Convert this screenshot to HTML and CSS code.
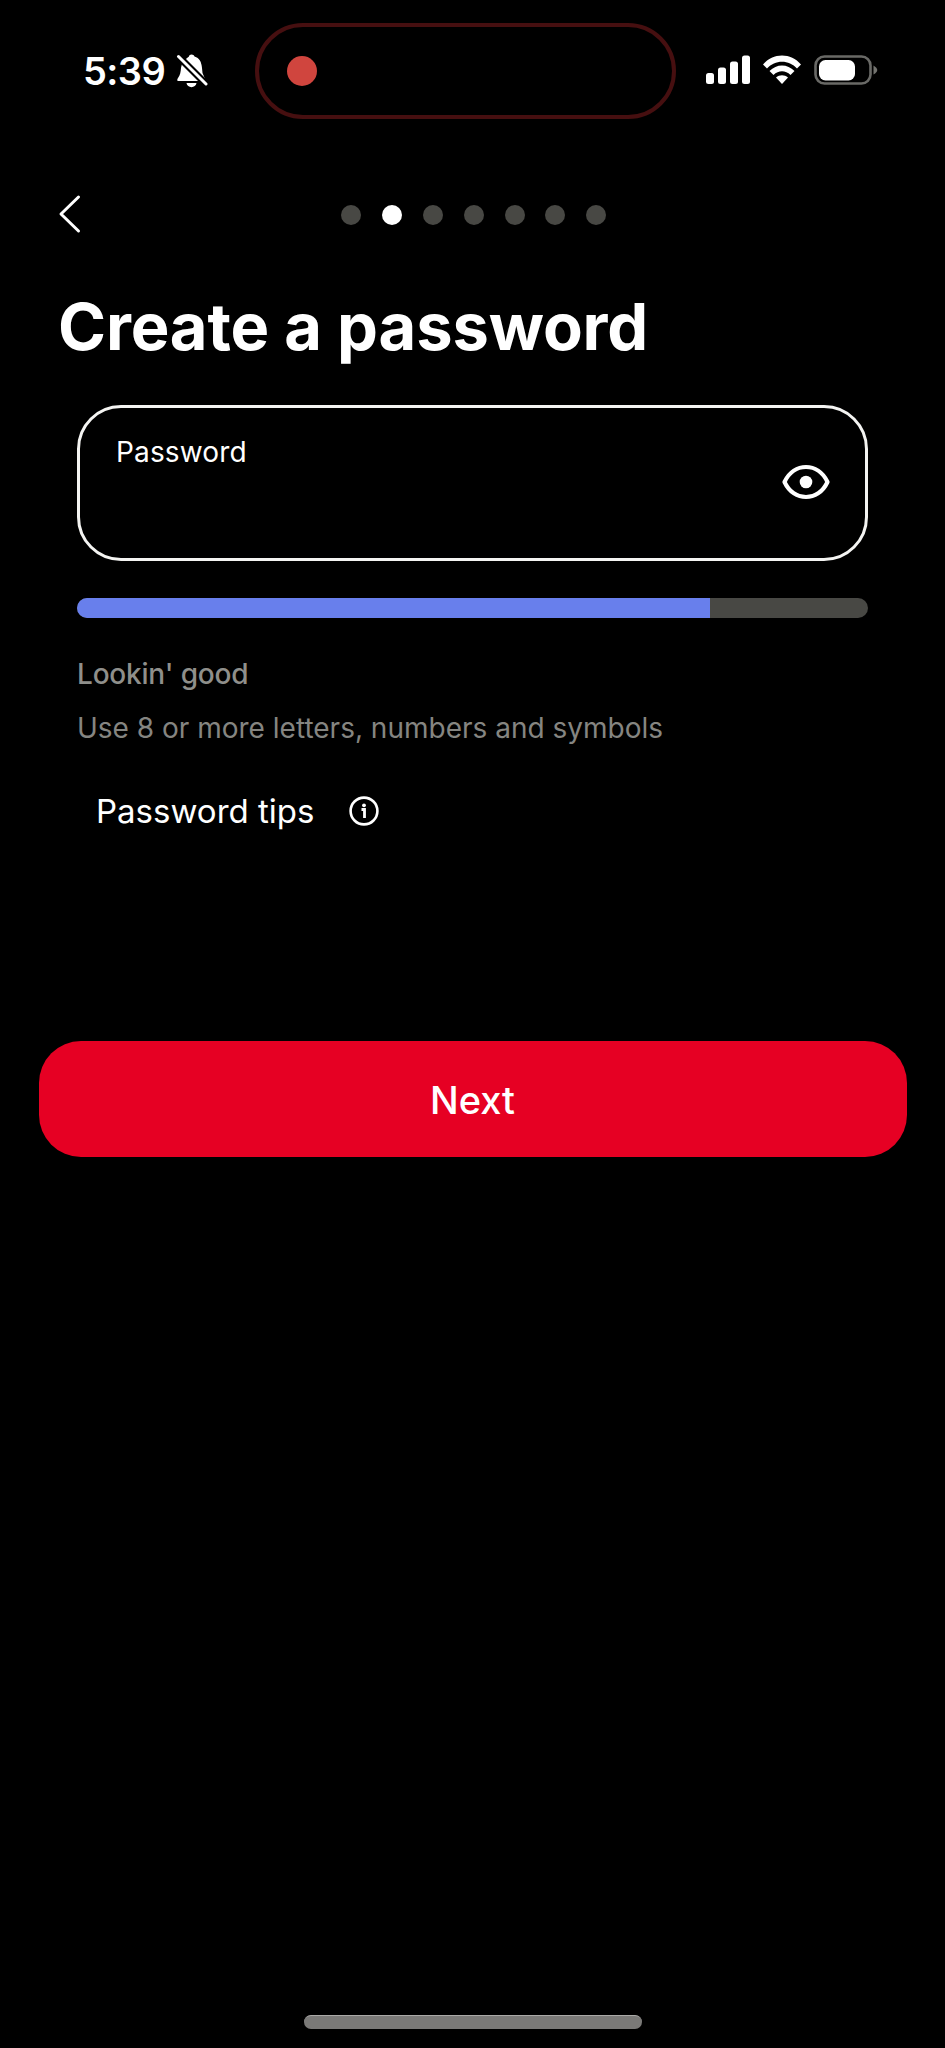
FILE: index.html
```html
<!DOCTYPE html>
<html lang="en">
<head>
<meta charset="utf-8">
<title>Create a password</title>
<link rel="stylesheet" href="styles.css">
</head>
<body>
<div class="screen">
  <header class="status">
    <div class="clock"><span class="time">5:39</span>
      <svg class="bell" width="32" height="36" viewBox="0 0 32 36"><path fill="#fff" d="M9 7.5C10.500 5 12.500 3.800 13 3.500C13 .7 18 .7 18.500 3.500C23.500 5 25.500 9 26 15L26.500 20L29.500 27L20 18ZM5 15C5.200 14 5.500 12.500 6 11L23.500 28H2C1 28 1 26 2 25C4.200 22 4.700 19 5 15ZM10.500 30H20.500C20 35.500 11 35.500 10.500 30Z"/><path stroke="#000" stroke-width="7" d="M3 4L30 31"/><path stroke="#fff" stroke-width="3" stroke-linecap="round" d="M2.500 3.500L30 31"/></svg>
    </div>
    <div class="island"><span class="record"></span></div>
    <div class="system">
      <svg width="45" height="30" viewBox="0 0 45 30" fill="#fff"><rect x="0" y="18" width="8" height="11" rx="2.500"/><rect x="12" y="12.500" width="8" height="16.500" rx="2.500"/><rect x="24" y="6.500" width="8" height="22.500" rx="2.500"/><rect x="36" y="0.500" width="8" height="28.500" rx="2.500"/></svg>
      <svg class="wifi" width="38" height="30" viewBox="0 0 38 30" fill="#fff"><path d="M0 9.500C10-2.500 28-2.500 38 9.500L34 13.500C26 4.500 12 4.500 4 13.500Z"/><path d="M6.500 16C13.500 8.500 24.500 8.500 31.500 16L27.500 20C22.500 15 15.500 15 10.500 20Z"/><path d="M13 22.500C16.500 19.500 21.500 19.500 25 22.500L19 29Z"/></svg>
      <svg class="battery" width="64" height="30" viewBox="0 0 64 30"><rect x="1.500" y="1.500" width="55" height="27" rx="9" fill="none" stroke="#696966" stroke-width="2.600"/><rect x="5" y="5" width="36" height="20.500" rx="6.500" fill="#fff"/><path fill="#73736f" d="M59.500 10.500Q67 15 59.500 19.500Z"/></svg>
    </div>
  </header>
  <nav class="steps">
    <svg class="back" width="24" height="40" viewBox="0 0 24 40"><path d="M20.500 3L3 20L20.500 37" fill="none" stroke="#fff" stroke-width="3" stroke-linecap="round" stroke-linejoin="round"/></svg>
    <div class="dots"><i class="dot"></i><i class="dot active"></i><i class="dot"></i><i class="dot"></i><i class="dot"></i><i class="dot"></i><i class="dot"></i></div>
  </nav>
  <h1 class="title"><span>Create a password</span></h1>
  <main class="form">
    <div class="field"><label class="label">Password</label>
      <svg class="eye" width="50" height="38" viewBox="0 0 50 38"><path d="M3.500 19C13-1 37-1 46.500 19C37 39 13 39 3.500 19Z" fill="none" stroke="#fff" stroke-width="4.200" stroke-linejoin="round"/><circle cx="25" cy="19" r="6.300" fill="#fff"/></svg>
    </div>
    <div class="meter"><div class="meter-fill" style="width:80%"></div></div>
    <p class="strength"><span>Lookin' good</span></p>
    <p class="hint"><span>Use 8 or more letters, numbers and symbols</span></p>
    <div class="tips"><span>Password tips</span>
      <svg width="30" height="30" viewBox="0 0 30 30"><circle cx="15" cy="15" r="13.400" fill="none" stroke="#fff" stroke-width="2.600"/><circle cx="15" cy="9.300" r="1.900" fill="#fff"/><path d="M12.500 13.500H15.500V22" fill="none" stroke="#fff" stroke-width="2.800"/></svg>
    </div>
  </main>
  <button class="next"><span>Next</span></button>
  <div class="home"></div>
</div>
</body>
</html>
```
FILE: styles.css
```css
* { box-sizing: border-box; margin: 0; padding: 0; }
body { background: #000; color: #fff; font-family: Inter, "Liberation Sans", sans-serif; }
svg { display: block; flex: none; }
.screen { height: 2048px; display: flex; flex-direction: column; overflow: hidden; }
.status { height: 142px; display: grid; grid-template-columns: 255px 421px 1fr; align-items: start; flex: none; }
.clock { display: flex; padding: 51px 0 0 83px; }
.time { font-size: 38px; font-weight: 600; line-height: 41px; width: 93px; letter-spacing: -0.6px; }
.bell { margin-top: 2px; }
.island { height: 96px; margin-top: 23px; border: 4px solid #460f10; border-radius: 48px; display: flex; align-items: center; padding-left: 28px; }
.record { width: 30px; height: 30px; border-radius: 50%; background: #d0453e; }
.system { display: flex; padding: 55px 0 0 30px; }
.wifi { margin-left: 12px; }
.battery { margin-left: 13px; }
.steps { height: 144px; flex: none; display: grid; grid-template-columns: 341px 1fr; align-items: center; }
.back { margin-left: 58px; }
.dots { display: flex; gap: 20.9px; padding-top: 1px; }
.dot { width: 20px; height: 20px; border-radius: 50%; background: #484844; }
.dot.active { background: #fff; }
.title { height: 80px; line-height: 82px; padding-left: 58px; font-size: 65px; font-weight: 700; letter-spacing: -0.15px; white-space: nowrap; flex: none; }
.form { padding: 39px 77px 0; height: 675px; flex: none; }
.field { height: 156px; border: 3px solid #f4f4f2; border-radius: 44px; display: flex; justify-content: space-between; padding: 24px 34px 0 36px; }
.label { font-size: 28px; line-height: 40px; letter-spacing: 0.15px; }
.eye { margin-top: 31px; }
.meter { height: 20px; margin-top: 37px; background: #484844; border-radius: 10px; overflow: hidden; }
.meter-fill { height: 100%; background: #687fec; }
.strength, .hint { font-size: 28px; line-height: 54px; white-space: nowrap; }
.strength { margin-top: 29px; color: #8f8f8b; font-weight: 500; letter-spacing: -0.2px; }
.hint { color: #858581; }
.tips { display: flex; align-items: center; justify-content: space-between; width: 322px; height: 60px; margin-top: 26px; padding: 0 20px 0 19px; font-size: 33px; white-space: nowrap; }
.next { display: block; flex: none; width: 868px; height: 116px; margin: 0 auto; border: 0; border-radius: 42px; background: #e60023; color: #fff; font: 500 38px/118px Inter, sans-serif; }
.home { width: 338px; height: 14px; margin: auto 0 19px 304px; border-radius: 7px; background: #7a7977; border-top: 1px solid #aaa9a7; }
```
